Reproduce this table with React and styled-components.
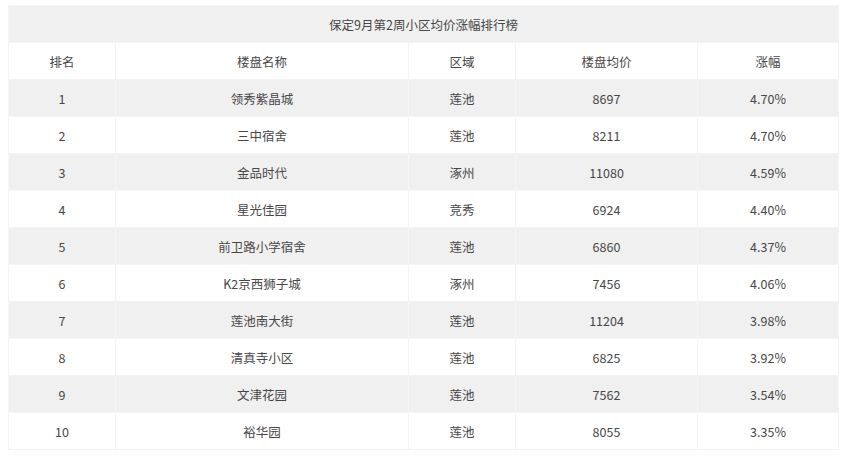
import React from 'react';
import styled, { createGlobalStyle } from 'styled-components';

const GlobalStyle = createGlobalStyle`
  body {
    margin: 0;
    background: #ffffff;
    font-family: "Noto Sans CJK SC", "Noto Sans", sans-serif;
  }
`;

const Wrapper = styled.div`
  padding: 5px 11px 0 8px;
`;

const Table = styled.table`
  width: 830px;
  border-collapse: collapse;
  table-layout: fixed;
  font-size: 12.5px;
  color: #474747;
`;

const Title = styled.th`
  height: 36px;
  padding: 0;
  background: #f0f0f0;
  font-weight: normal;
  text-align: center;
  border: 1px solid #f4f4f4;
`;

const Row = styled.tr`
  background: ${props => props.shade ? "#f0f0f0" : "#ffffff"};
`;

const Cell = styled.td`
  height: 36px;
  padding: 0;
  text-align: center;
  font-weight: normal;
  border: 1px solid ${props => props.shade ? "#f6f6f6" : "#f3f3f3"};
`;

const widths = [107, 293, 107, 182, 141];
const headers = ["排名", "楼盘名称", "区域", "楼盘均价", "涨幅"];

const rows = [
  [1, "领秀紫晶城", "莲池", 8697, "4.70%"],
  [2, "三中宿舍", "莲池", 8211, "4.70%"],
  [3, "金品时代", "涿州", 11080, "4.59%"],
  [4, "星光佳园", "竞秀", 6924, "4.40%"],
  [5, "前卫路小学宿舍", "莲池", 6860, "4.37%"],
  [6, "K2京西狮子城", "涿州", 7456, "4.06%"],
  [7, "莲池南大街", "莲池", 11204, "3.98%"],
  [8, "清真寺小区", "莲池", 6825, "3.92%"],
  [9, "文津花园", "莲池", 7562, "3.54%"],
  [10, "裕华园", "莲池", 8055, "3.35%"],
];

export default function App() {
  return (
    <Wrapper>
      <GlobalStyle />
      <Table>
        <colgroup>
          {widths.map((w, i) => <col key={i} style={{ width: w }} />)}
        </colgroup>
        <thead>
          <tr>
            <Title colSpan={5}>保定9月第2周小区均价涨幅排行榜</Title>
          </tr>
        </thead>
        <tbody>
          <Row>
            {headers.map(h => <Cell key={h}>{h}</Cell>)}
          </Row>
          {rows.map((r, i) => {
            const shade = i % 2 === 0;
            return (
              <Row key={r[0]} shade={shade}>
                {r.map((v, j) => <Cell key={j} shade={shade}>{v}</Cell>)}
              </Row>
            );
          })}
        </tbody>
      </Table>
    </Wrapper>
  );
}
